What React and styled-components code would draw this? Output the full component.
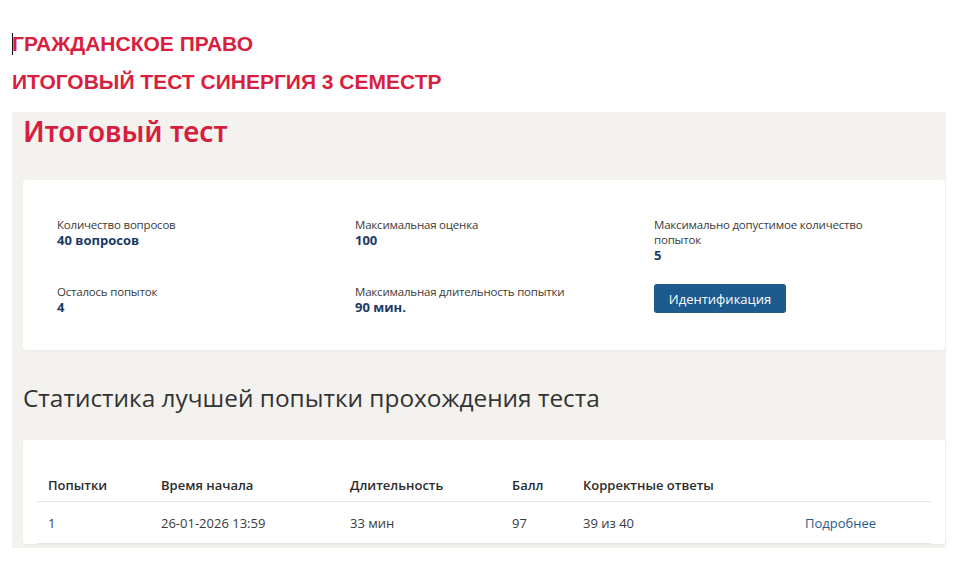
import React from 'react';
import styled, { createGlobalStyle } from 'styled-components';

const GlobalStyle = createGlobalStyle`
  html, body {
    margin: 0;
    padding: 0;
    background: #ffffff;
  }
  body {
    font-family: "Open Sans", "Noto Sans", sans-serif;
    color: #333333;
  }
`;

const info = [
  { label: 'Количество вопросов', value: '40 вопросов' },
  { label: 'Максимальная оценка', value: '100' },
  { label: 'Максимально допустимое количество попыток', value: '5' },
  { label: 'Осталось попыток', value: '4' },
  { label: 'Максимальная длительность попытки', value: '90 мин.' },
];

const columns = ['Попытки', 'Время начала', 'Длительность', 'Балл', 'Корректные ответы', ''];

const attempts = [
  { n: '1', start: '26-01-2026 13:59', duration: '33 мин', score: '97', correct: '39 из 40' },
];

const Page = styled.div`
  width: 953px;
  height: 564px;
  overflow: hidden;
`;

const Header = styled.header`
  padding: 32px 0 0 12px;
  display: flex;
  flex-direction: column;
  gap: 14px;
  height: 112px;
  box-sizing: border-box;
`;

const Heading = styled.div`
  position: relative;
  font-family: "Liberation Sans", Arial, sans-serif;
  font-weight: 700;
  font-size: 21px;
  line-height: 24px;
  color: #d91f40;
`;

const Cursor = styled.span`
  position: absolute;
  left: 0;
  top: 1px;
  width: 1px;
  height: 22px;
  background: #111;
`;

const Panel = styled.section`
  margin-left: 12px;
  width: 934px;
  height: 436px;
  box-sizing: border-box;
  padding: 0 1px 0 11px;
  background: #f3f2ef;
  overflow: hidden;
`;

const Title = styled.h1`
  margin: 0;
  padding-top: 1px;
  font-family: "Noto Sans", sans-serif;
  font-weight: 600;
  font-size: 28px;
  line-height: 36px;
  color: #d81e3f;
`;

const Card = styled.div`
  background: #ffffff;
  border-radius: 3px;
  box-shadow: 0 1px 2px rgba(0, 0, 0, 0.05);
  margin-top: ${p => p.$top}px;
  padding: ${p => p.$pad};
`;

const InfoGrid = styled.div`
  display: grid;
  grid-template-columns: 298px 299px 215px;
  row-gap: 21px;
`;

const InfoItem = styled.div`
  display: flex;
  flex-direction: column;
`;

const Label = styled.span`
  font-size: 11.5px;
  letter-spacing: -0.2px;
  line-height: 15px;
  color: #3a3a3a;
`;

const Value = styled.span`
  font-size: 13px;
  line-height: 16px;
  font-weight: 700;
  color: #1b3a66;
`;

const Button = styled.button`
  align-self: flex-start;
  width: 132px;
  height: 29px;
  border: none;
  border-radius: 3px;
  background: #1d5a8e;
  color: #ffffff;
  font-family: "Open Sans", "Noto Sans", sans-serif;
  font-size: 13px;
  font-weight: 500;
  padding: 0;
  cursor: pointer;
`;

const SubTitle = styled.h2`
  margin: 32px 0 0;
  font-family: "Open Sans", "Noto Sans", sans-serif;
  font-weight: 400;
  font-size: 24.4px;
  line-height: 32px;
  color: #333333;
`;

const Row = styled.div`
  display: grid;
  grid-template-columns: 113px 189px 162px 71px 222px 136px;
  border-bottom: 1px solid #e6e6e6;
`;

const Cell = styled.div`
  padding: ${p => (p.$head ? '8px 11px' : '13px 11px 12px')};
  font-size: 13px;
  line-height: 16px;
  font-weight: ${p => (p.$head ? 600 : 400)};
  color: ${p => (p.$head ? '#2b2b2b' : '#3a3a3a')};
  white-space: nowrap;
`;

const More = styled.a`
  color: #2a5a8a;
  text-decoration: none;
`;

export default function App() {
  return (
    <Page>
      <GlobalStyle />
      <Header>
        <Heading>
          <Cursor />
          ГРАЖДАНСКОЕ ПРАВО
        </Heading>
        <Heading>ИТОГОВЫЙ ТЕСТ СИНЕРГИЯ 3 СЕМЕСТР</Heading>
      </Header>
      <Panel>
        <Title>Итоговый тест</Title>
        <Card $top={31} $pad="37px 0 35px 34px">
          <InfoGrid>
            {info.map(item => (
              <InfoItem key={item.label}>
                <Label>{item.label}</Label>
                <Value>{item.value}</Value>
              </InfoItem>
            ))}
            <InfoItem>
              <Button>Идентификация</Button>
            </InfoItem>
          </InfoGrid>
        </Card>
        <SubTitle>Статистика лучшей попытки прохождения теста</SubTitle>
        <Card $top={26} $pad="29px 14px 0">
          <Row>
            {columns.map((c, i) => (
              <Cell $head key={i}>{c}</Cell>
            ))}
          </Row>
          {attempts.map(a => (
            <Row key={a.n}>
              <Cell>{a.n}</Cell>
              <Cell>{a.start}</Cell>
              <Cell>{a.duration}</Cell>
              <Cell>{a.score}</Cell>
              <Cell>{a.correct}</Cell>
              <Cell><More href="#">Подробнее</More></Cell>
            </Row>
          ))}
        </Card>
      </Panel>
    </Page>
  );
}
